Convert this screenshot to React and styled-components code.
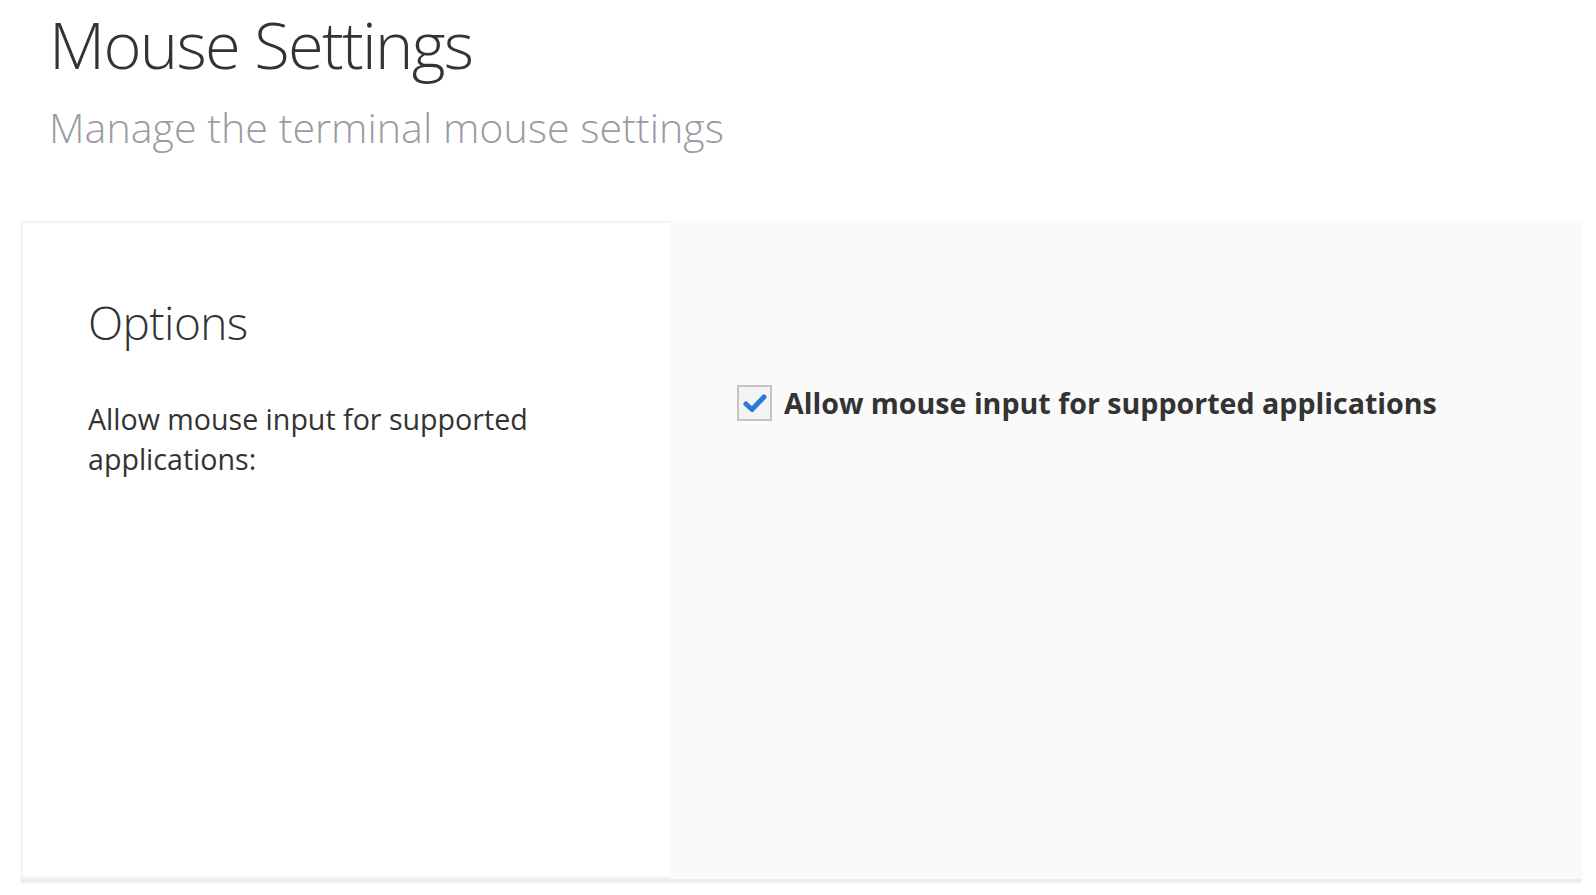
import React, { useState } from "react";
import styled, { createGlobalStyle } from "styled-components";

const Global = createGlobalStyle`
  html, body { margin: 0; padding: 0; background: #ffffff; }
  body { font-family: "Open Sans", "Liberation Sans", sans-serif; color: #333333; }
  * { box-sizing: border-box; }
`;

const Page = styled.div`
  width: 1596px;
  height: 895px;
  overflow: hidden;
  padding: 4px 15px 0 21px;
`;

const Header = styled.header`
  padding: 0 0 0 28px;
  height: 217px;
`;

const Title = styled.h1`
  margin: 0;
  font-size: 65px;
  font-weight: 300;
  line-height: 1.25;
  color: #333333;
  letter-spacing: -1.7px;
`;

const Subtitle = styled.p`
  margin: 18px 0 0;
  font-size: 41.2px;
  font-weight: 300;
  line-height: 1.2;
  color: #9b9ba3;
`;

const Card = styled.section`
  display: flex;
  width: 1560px;
  height: 660px;
  box-shadow: 0 2px 2px rgba(0, 0, 0, 0.08);
  border-bottom: 2px solid #ececec;
`;

const LeftPane = styled.div`
  width: 649px;
  flex: none;
  background: #ffffff;
  border: 2px solid #f3f3f3;
  border-right: none;
  padding: 72px 40px 0 65px;
`;

const RightPane = styled.div`
  flex: 1;
  background: #fafafa;
  padding: 164px 40px 0 67px;
`;

const SectionTitle = styled.h2`
  margin: 0;
  font-size: 46px;
  font-weight: 300;
  line-height: 1.2;
  color: #333333;
  letter-spacing: -0.6px;
`;

const Description = styled.p`
  margin: 49px 0 0;
  font-size: 28.6px;
  font-weight: 400;
  line-height: 40px;
  color: #333333;
`;

const CheckRow = styled.label`
  display: flex;
  align-items: center;
  gap: 12px;
  cursor: pointer;
`;

const Box = styled.span`
  width: 35px;
  height: 36px;
  flex: none;
  border: 2px solid #c4c4c4;
  background: #f3f3f3;
  display: flex;
  align-items: center;
  justify-content: center;
`;

const CheckLabel = styled.span`
  font-size: 28.6px;
  font-weight: 700;
  color: #333333;
  line-height: 1.2;
`;

export default function App() {
  const [checked, setChecked] = useState(true);
  return (
    <>
      <Global />
      <Page>
        <Header>
          <Title>Mouse Settings</Title>
          <Subtitle>Manage the terminal mouse settings</Subtitle>
        </Header>
        <Card>
          <LeftPane>
            <SectionTitle>Options</SectionTitle>
            <Description>
              Allow mouse input for supported
              <br />
              applications:
            </Description>
          </LeftPane>
          <RightPane>
            <CheckRow onClick={() => setChecked(!checked)}>
              <Box>
                {checked && (
                  <svg width="24" height="20" viewBox="0 0 24 20">
                    <path
                      d="M3 11 L9 16.5 L21 4"
                      fill="none"
                      stroke="#2b7bd6"
                      strokeWidth="5"
                      strokeLinecap="round"
                      strokeLinejoin="round"
                    />
                  </svg>
                )}
              </Box>
              <CheckLabel>Allow mouse input for supported applications</CheckLabel>
            </CheckRow>
          </RightPane>
        </Card>
      </Page>
    </>
  );
}
